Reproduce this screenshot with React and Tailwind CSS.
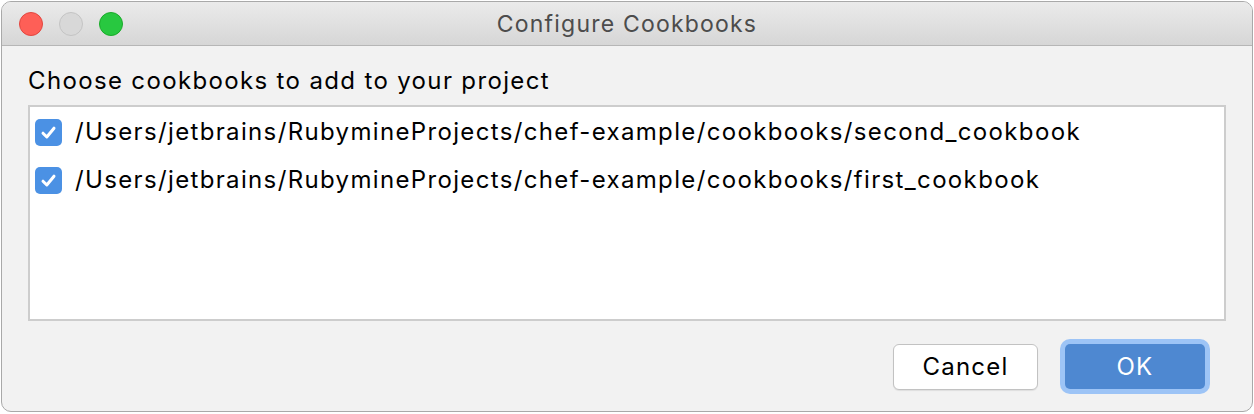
import React from 'react'

const paths = [
  '/Users/jetbrains/RubymineProjects/chef-example/cookbooks/second_cookbook',
  '/Users/jetbrains/RubymineProjects/chef-example/cookbooks/first_cookbook',
]

function Checkbox() {
  return (
    <span className="flex h-[27px] w-[27px] shrink-0 items-center justify-center rounded-[5px] bg-[#4b91e4]">
      <svg width="17" height="17" viewBox="0 0 17 17" fill="none">
        <path d="M3 9.2 L6.8 13 L14 4.2" stroke="white" strokeWidth="3" strokeLinecap="round" strokeLinejoin="round" />
      </svg>
    </span>
  )
}

export default function App() {
  return (
    <div className="h-[414px] w-[1254px] bg-white p-px font-['Inter',sans-serif] text-[24px] tracking-[1.35px] text-black">
      <div className="flex h-[411px] w-[1252px] flex-col overflow-hidden rounded-[10px] border border-[#a9a9a9] bg-[#f2f2f2]">
        {/* title bar */}
        <div className="grid h-[44px] shrink-0 grid-cols-[1fr_auto_1fr] items-center border-b border-[#b6b6b6] bg-gradient-to-b from-[#ebebeb] to-[#d6d6d6] pt-px">
          <div className="flex items-center gap-[16px] pl-[17px]">
            <span className="h-[24px] w-[24px] rounded-full border border-[#e2463f] bg-[#fe5f57]" />
            <span className="h-[24px] w-[24px] rounded-full border border-[#c4c4c4] bg-[#d8d8d8]" />
            <span className="h-[24px] w-[24px] rounded-full border border-[#1aab29] bg-[#28c840]" />
          </div>
          <div className="text-[23px] tracking-[1.2px] text-[#4c4c4c]">Configure Cookbooks</div>
          <div />
        </div>

        <div className="flex flex-1 flex-col px-[26px]">
          <div className="mt-[21px] h-[28px] leading-[28px]">Choose cookbooks to add to your project</div>

          <div className="mt-[10px] h-[216px] border-2 border-[#cdcdcd] bg-white pt-px">
            {paths.map((p) => (
              <div key={p} className="flex h-[48px] items-center gap-[13px] pl-[5px]">
                <Checkbox />
                <span>{p}</span>
              </div>
            ))}
          </div>

          <div className="mt-[23px] flex justify-end gap-[27px] pr-[21px]">
            <button className="h-[46px] w-[145px] rounded-[6px] border border-[#c2c2c2] bg-white text-[24px] tracking-[1.25px] text-black shadow-[0_1px_1px_rgba(0,0,0,0.08)]">
              Cancel
            </button>
            <button className="h-[45px] w-[140px] rounded-[5px] bg-[#4e88d1] text-[24px] tracking-[1.2px] text-white ring-[5px] ring-[#9dc4f6]">
              OK
            </button>
          </div>
        </div>
      </div>
    </div>
  )
}
